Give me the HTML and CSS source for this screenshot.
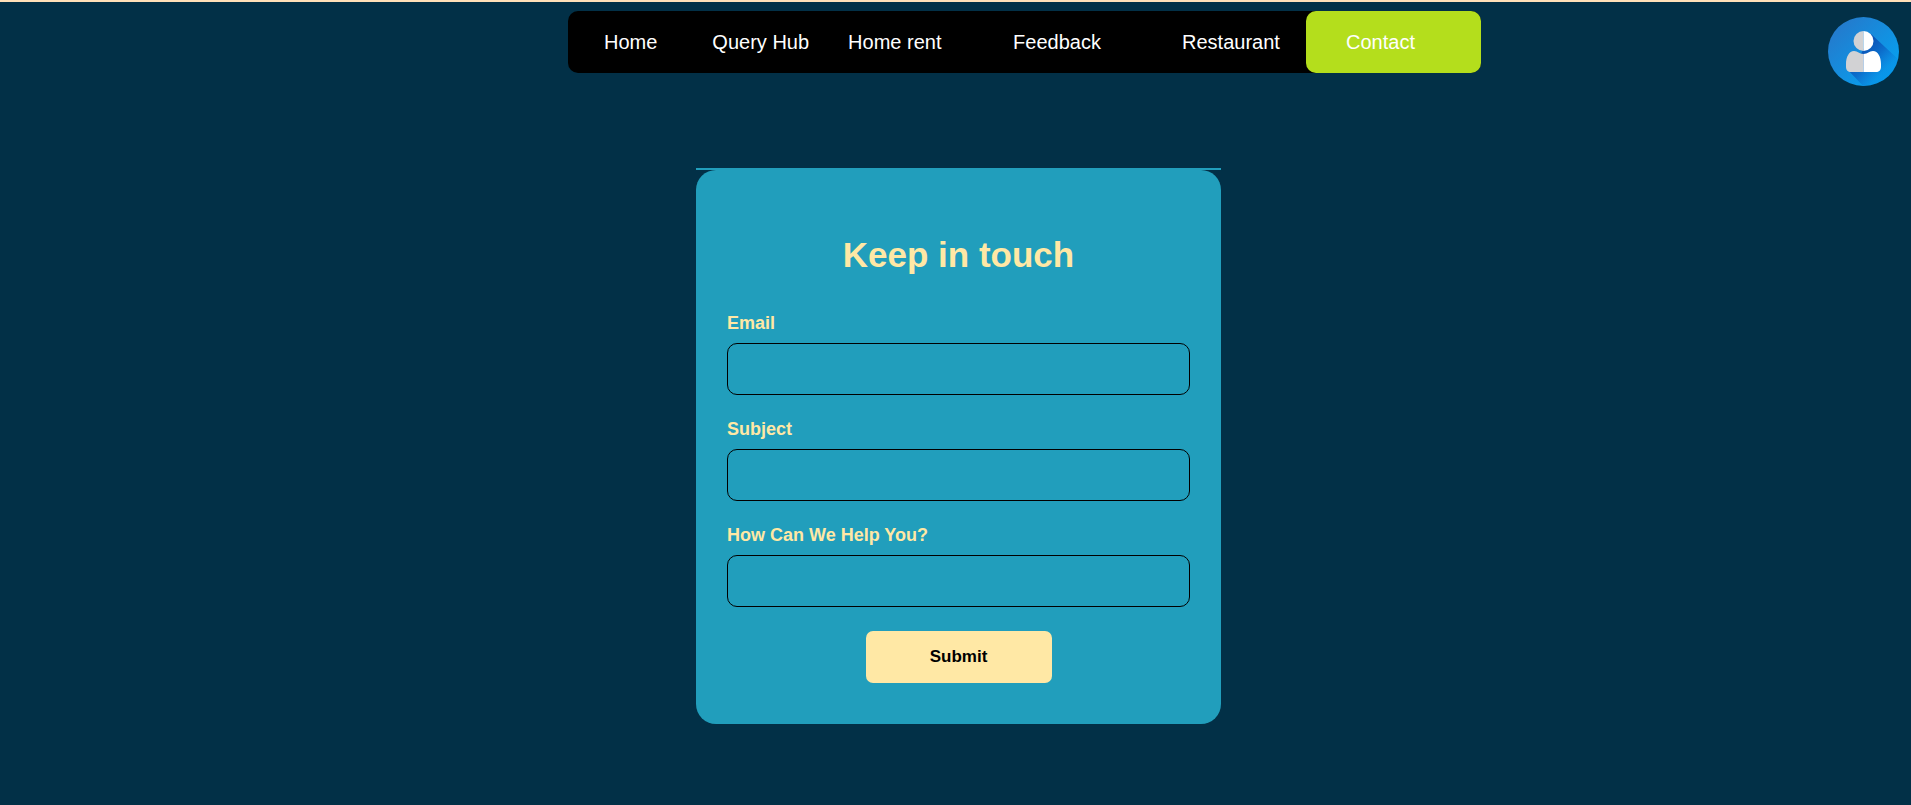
FILE: index.html
```html
<!DOCTYPE html>
<html lang="en">
<head>
<meta charset="utf-8">
<title>Contact</title>
<link rel="stylesheet" href="styles.css">
</head>
<body>
<header class="site-header">
  <nav class="nav">
    <a class="nav-link nav-link-first" href="#">Home</a>
    <a class="nav-link" href="#">Query Hub</a>
    <a class="nav-link" href="#">Home rent</a>
    <a class="nav-link" href="#">Feedback</a>
    <a class="nav-link" href="#">Restaurant</a>
    <a class="nav-link nav-link-active" href="#">Contact</a>
  </nav>
  <a class="profile" href="#" aria-label="Profile">
    <svg class="avatar" viewBox="0 0 71 69" preserveAspectRatio="none" aria-hidden="true">
      <defs>
        <linearGradient id="disc" x1="0" y1="0" x2="1" y2="1">
          <stop offset="0.1" stop-color="#2579cb"/>
          <stop offset="0.9" stop-color="#04a3f2"/>
        </linearGradient>
        <linearGradient id="shade" gradientUnits="userSpaceOnUse" x1="34" y1="30" x2="57" y2="53">
          <stop offset="0" stop-color="#0a50b4"/>
          <stop offset="0.5" stop-color="#0b66c6" stop-opacity="0.85"/>
          <stop offset="1" stop-color="#0b7ad8" stop-opacity="0.25"/>
        </linearGradient>
        <clipPath id="round"><ellipse cx="35.5" cy="34.5" rx="35.5" ry="34.5"/></clipPath>
      </defs>
      <ellipse cx="35.5" cy="34.5" rx="35.5" ry="34.5" fill="url(#disc)"/>
      <path d="M43 17L72 44V72H38L20 53L33 37Z" fill="url(#shade)" clip-path="url(#round)"/>
      <path d="M35.5 37C31 37 30 34 26 34C21 34 18 40 18 47V50C18 53 20 55 23 55H35.5Z" fill="#d2d2d4"/>
      <path d="M35.5 37C40 37 41 34 45 34C50 34 53 40 53 47V50C53 53 51 55 48 55H35.5Z" fill="#fff"/>
      <path d="M35.5 14A10 10 0 0 0 35.5 34Z" fill="#d2d2d4"/>
      <path d="M35.5 14A10 10 0 0 1 35.5 34Z" fill="#fff"/>
    </svg>
  </a>
</header>
<main class="page">
  <section class="contact">
    <form class="card">
      <h1 class="title">Keep in touch</h1>
      <div class="field">
        <label class="label" for="email">Email</label>
        <input class="input" id="email" type="email">
      </div>
      <div class="field">
        <label class="label" for="subject">Subject</label>
        <input class="input" id="subject" type="text">
      </div>
      <div class="field">
        <label class="label" for="message">How Can We Help You?</label>
        <input class="input" id="message" type="text">
      </div>
      <button class="submit" type="submit">Submit</button>
    </form>
  </section>
</main>
</body>
</html>
```

FILE: styles.css
```css
* {
  box-sizing: border-box;
}

body {
  margin: 0;
  border-top: 2px solid #ffe0b8;
  background: #023047;
  font-family: "Liberation Sans", Arial, sans-serif;
}

.site-header {
  display: grid;
  grid-template-columns: 568fr 913fr 430fr;
  padding-top: 9px;
}

.nav {
  grid-column: 2;
  display: grid;
  grid-template-columns: 106fr 131fr 166fr 170fr 164fr 176fr;
  align-self: start;
  border-radius: 10px;
  background: #000;
}

.nav-link {
  padding-left: 39px;
  border-radius: 10px;
  color: #fff;
  font-size: 20px;
  line-height: 62px;
  text-decoration: none;
  white-space: nowrap;
}

.nav-link-first {
  padding-left: 36px;
}

.nav-link-active {
  padding-left: 40px;
  background: #b4de1c;
}

.profile {
  justify-self: end;
  padding: 6px 12px 0 0;
}

.avatar {
  display: block;
  width: 71px;
  height: 69px;
}

.page {
  display: flex;
  justify-content: center;
  padding: 82px 0 80px 6px;
}

.contact {
  width: 525px;
  max-width: 100%;
  border-top: 2px solid #219ebc;
}

.card {
  display: flex;
  flex-direction: column;
  gap: 24px;
  padding: 64px 31px 41px;
  border-radius: 20px;
  background: #219ebc;
}

.title {
  margin: 0 0 13px;
  color: #ffe8a5;
  font-size: 35px;
  line-height: 42px;
  text-align: center;
}

.field {
  display: flex;
  flex-direction: column;
  gap: 10px;
}

.label {
  color: #ffe8a5;
  font-size: 18px;
  font-weight: bold;
  line-height: 20px;
}

.input {
  width: 100%;
  height: 52px;
  padding: 0 16px;
  border: 1px solid #000;
  border-radius: 10px;
  background: transparent;
  color: #ffe8a5;
  font: inherit;
  font-size: 18px;
}

.submit {
  align-self: center;
  width: 186px;
  height: 52px;
  border: 0;
  border-radius: 7px;
  background: #ffe8a5;
  color: #000;
  font: bold 17px "Liberation Sans", Arial, sans-serif;
}
```
